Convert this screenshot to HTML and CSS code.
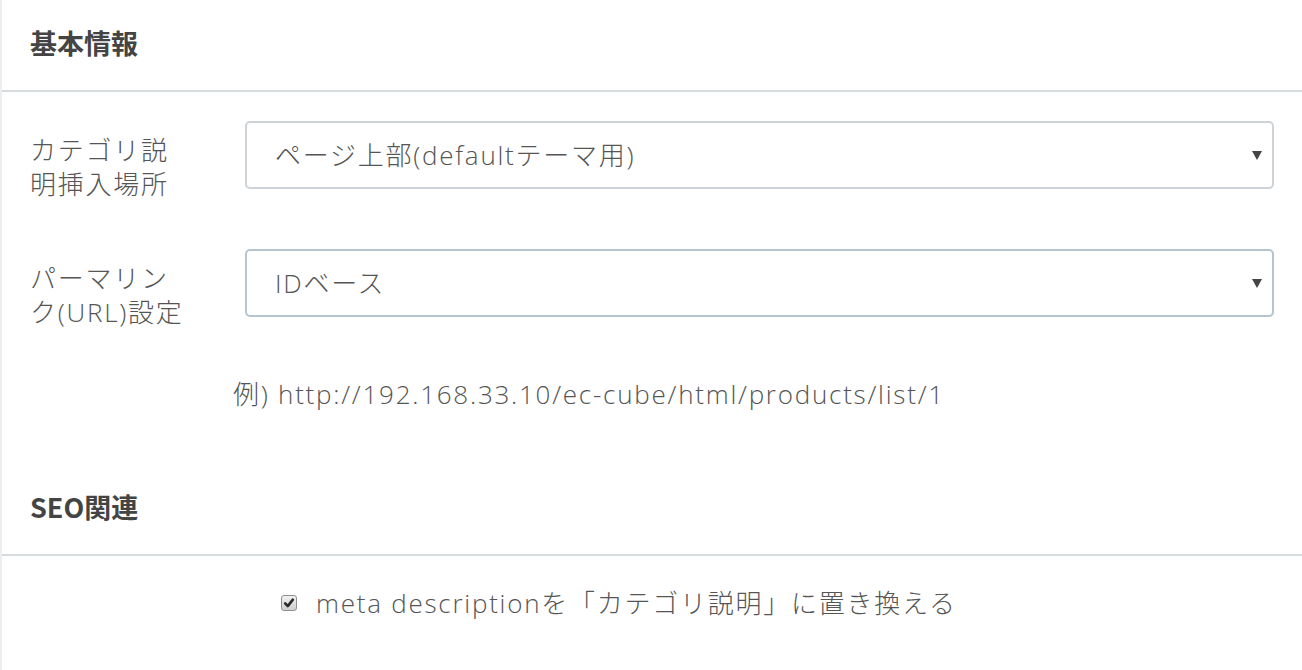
FILE: index.html
```html
<!DOCTYPE html>
<html lang="ja">
<head>
<meta charset="utf-8">
<title>カテゴリ設定</title>
<link rel="stylesheet" href="styles.css">
</head>
<body>
<div class="card">
  <section class="section">
    <div class="section-header"><h2 class="section-title">基本情報</h2></div>
    <div class="section-body basic">
      <div class="form-row">
        <label class="form-label">カテゴリ説明挿入場所</label>
        <div class="select-wrap">
          <select class="form-select">
            <option>ページ上部(defaultテーマ用)</option>
          </select>
        </div>
      </div>
      <div class="form-row">
        <label class="form-label">パーマリンク(URL)設定</label>
        <div class="select-wrap focused">
          <select class="form-select">
            <option>IDベース</option>
          </select>
        </div>
      </div>
      <p class="help-text">例) http://192.168.33.10/ec-cube/html/products/list/1</p>
    </div>
  </section>
  <section class="section">
    <div class="section-header"><h2 class="section-title">SEO関連</h2></div>
    <div class="section-body seo">
      <label class="check-row">
        <span class="check-box">
          <svg viewBox="0 0 16 16" aria-hidden="true"><path d="M3.6 8.4 L6.6 11.6 L12.4 4.2" fill="none" stroke="#2a2a2a" stroke-width="3" stroke-linecap="round" stroke-linejoin="round"/></svg>
        </span>
        <span class="check-text">meta descriptionを「カテゴリ説明」に置き換える</span>
      </label>
    </div>
  </section>
</div>
</body>
</html>
```

FILE: styles.css
```css
html, body {
  margin: 0;
  padding: 0;
  background: #ffffff;
}

body {
  font-family: "Open Sans", "Noto Sans CJK JP", sans-serif;
  font-weight: 300;
  color: #555555;
  font-size: 26px;
  letter-spacing: 1.75px;
}

.card {
  border-left: 2px solid #eceeef;
  min-height: 670px;
}

.section-header {
  height: 92px;
  box-sizing: border-box;
  padding: 0 28px 6px;
  display: flex;
  align-items: center;
  border-bottom: 2px solid #d6dbde;
}

.section-title {
  margin: 0;
  font-family: "Noto Sans CJK JP", sans-serif;
  font-size: 27px;
  font-weight: 700;
  color: #444444;
  line-height: 1;
  letter-spacing: 0;
}

.section-body {
  padding: 29px 28px 0 28px;
}

.section-body.basic {
  padding-bottom: 53px;
}

.form-row {
  display: flex;
  align-items: flex-start;
  margin-bottom: 48px;
}

.form-label {
  width: 164px;
  margin-right: 51px;
  padding-top: 12px;
  font-size: 26px;
  line-height: 34px;
  color: #555555;
}

.select-wrap {
  position: relative;
  flex: 1;
}

.select-wrap::after {
  content: "";
  position: absolute;
  right: 12px;
  top: 30px;
  border-left: 5px solid transparent;
  border-right: 5px solid transparent;
  border-top: 9px solid #444444;
  pointer-events: none;
}

.form-select {
  display: block;
  width: 100%;
  height: 68px;
  box-sizing: border-box;
  border: 2px solid #cdd3d6;
  border-radius: 5px;
  background: #ffffff;
  padding: 0 40px 0 28px;
  font-family: inherit;
  font-weight: 300;
  font-size: 26px;
  letter-spacing: 1.75px;
  color: #555555;
  -webkit-appearance: none;
  appearance: none;
  outline: none;
}

.focused .form-select {
  border-color: #b5c5cf;
}

.help-text {
  margin: 0 0 0 203px;
  font-size: 26px;
  line-height: 34px;
  color: #555555;
}

.section-body.seo {
  padding-top: 30px;
}

.check-row {
  display: flex;
  align-items: center;
  margin-left: 251px;
  height: 34px;
}

.check-box {
  flex: 0 0 16px;
  width: 16px;
  height: 16px;
  box-sizing: border-box;
  border: 1px solid #8f8f8f;
  border-radius: 3px;
  background: linear-gradient(#f2f2f2, #cfcfcf);
  display: flex;
  align-items: center;
  justify-content: center;
  margin-right: 19px;
}

.check-box svg {
  width: 14px;
  height: 14px;
}

.check-text {
  font-size: 26px;
  line-height: 34px;
  color: #555555;
}
```
